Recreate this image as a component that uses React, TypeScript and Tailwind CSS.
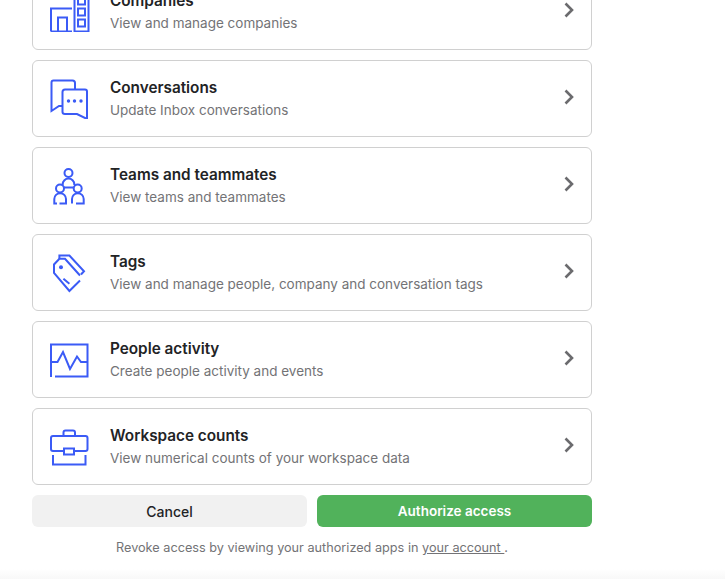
const scopes = [
  { title: "Companies", desc: "View and manage companies", icon: <CompaniesIcon /> },
  { title: "Conversations", desc: "Update Inbox conversations", icon: <ConversationsIcon /> },
  { title: "Teams and teammates", desc: "View teams and teammates", icon: <TeamsIcon /> },
  { title: "Tags", desc: "View and manage people, company and conversation tags", icon: <TagsIcon /> },
  { title: "People activity", desc: "Create people activity and events", icon: <ActivityIcon /> },
  { title: "Workspace counts", desc: "View numerical counts of your workspace data", icon: <BriefcaseIcon /> },
];

function IconBox({ children }: { children: React.ReactNode }) {
  return (
    <svg width="40" height="40" viewBox="0 0 40 40" fill="none" stroke="#3b5bf6" strokeWidth="2" className="shrink-0">
      {children}
    </svg>
  );
}

function CompaniesIcon() {
  return (
    <IconBox>
      <path d="M1 39.5V16.5H22" />
      <path d="M1 39.5H22" />
      <path d="M8 39.5V25.5H17V39.5" />
      <path d="M24.5 39.5V0H38.5V39.5H24.5Z" />
      <path d="M28 16.5H35V23.5H28Z" />
      <path d="M28 27.5H35V34.5H28Z" />
      <path d="M28 5.5H35V12.5H28Z" />
    </IconBox>
  );
}

function ConversationsIcon() {
  return (
    <IconBox>
      <path d="M12 27H9L1.5 32V3.5Q1.5 1.5 3.5 1.5H22.5Q25 1.5 25 4V10" />
      <path d="M15 10.5H35Q37 10.5 37 12.5V40L27 35H15Q12.5 35 12.5 33V13Q12.5 10.5 15 10.5Z" />
      <circle cx="18.5" cy="22" r="1.7" fill="#3b5bf6" stroke="none" />
      <circle cx="24.5" cy="22" r="1.7" fill="#3b5bf6" stroke="none" />
      <circle cx="31" cy="22" r="1.7" fill="#3b5bf6" stroke="none" />
    </IconBox>
  );
}

function TeamsIcon() {
  return (
    <IconBox>
      <circle cx="18.5" cy="7" r="4" />
      <path d="M12.7 19V18.3A5.8 5.8 0 0 1 24.3 18.3V19" />
      <path d="M14 21.5H23" />
      <circle cx="10" cy="22.5" r="4" />
      <circle cx="27.7" cy="22.5" r="4" />
      <path d="M7 37.5H4.3V33A5.85 5.85 0 0 1 16 33V37.5H9.5" />
      <path d="M22 37.5V33A5.85 5.85 0 0 1 33.7 33V37.5H26" />
    </IconBox>
  );
}

function TagsIcon() {
  return (
    <IconBox>
      <path d="M30 27.5L19.4 38L4 20V11.5L9.4 5.8H15L30 22.5" />
      <path d="M9.4 5.8V2.5H19.4L34 18.2L31 21.5" />
      <path d="M13.4 25.8L19.4 30.8" />
      <circle cx="11" cy="14.2" r="2" fill="#3b5bf6" stroke="none" />
    </IconBox>
  );
}

function ActivityIcon() {
  return (
    <IconBox>
      <path d="M1 37V4.5H37.5V36.5H5" />
      <path d="M1 22H7.5L13 12L20 29L27 16.5L31 22H37.5" />
    </IconBox>
  );
}

function BriefcaseIcon() {
  return (
    <IconBox>
      <path d="M14 24H3Q1 24 1 22V11Q1 9 3 9H35.5Q37.5 9 37.5 11V22Q37.5 24 35.5 24H24" />
      <path d="M13.5 9V5.5Q13.5 3.5 15.5 3.5H23Q25 3.5 25 5.5V9" />
      <path d="M14 21.5H24V27.5H14Z" />
      <path d="M3 28V37.5H35.5V28" />
    </IconBox>
  );
}

function Chevron() {
  return (
    <svg width="10" height="16" viewBox="0 0 10 16" fill="none" stroke="#6b6b6e" strokeWidth="2.6" className="shrink-0 mb-[3px]">
      <path d="M1.5 1.5L8 8L1.5 14.5" />
    </svg>
  );
}

export default function App() {
  return (
    <div className="h-[579px] overflow-hidden bg-white font-['Inter',sans-serif] relative">
      <div className="w-[560px] ml-8 -mt-[27px] flex flex-col gap-[10px]">
        {scopes.map((s) => (
          <div key={s.title} className="h-[77px] border border-[#d0d0d0] rounded-[6px] flex items-center pl-[17px] pr-[17px]">
            {s.icon}
            <div className="ml-5 flex-1">
              <div className="text-[15.3px] leading-[23px] font-semibold text-[#222325]">{s.title}</div>
              <div className="text-[13.5px] leading-[23px] text-[#737376]">{s.desc}</div>
            </div>
            <Chevron />
          </div>
        ))}
        <div className="flex gap-[10px]">
          <button className="flex-1 h-8 rounded-[6px] bg-[#f1f1f1] text-[14px] font-medium text-[#222325]">Cancel</button>
          <button className="flex-1 h-8 rounded-[6px] bg-[#51b25b] text-[13.5px] font-semibold text-white">Authorize access</button>
        </div>
        <p className="text-center text-[12.7px] leading-5 mt-[1px] text-[#737376]">
          Revoke access by viewing your authorized apps in{" "}
          <a href="#" className="underline">your account </a>.
        </p>
      </div>
      <div className="absolute left-0 right-0 bottom-0 h-[10px] bg-gradient-to-b from-white to-[#f8f8f8]" />
    </div>
  );
}
